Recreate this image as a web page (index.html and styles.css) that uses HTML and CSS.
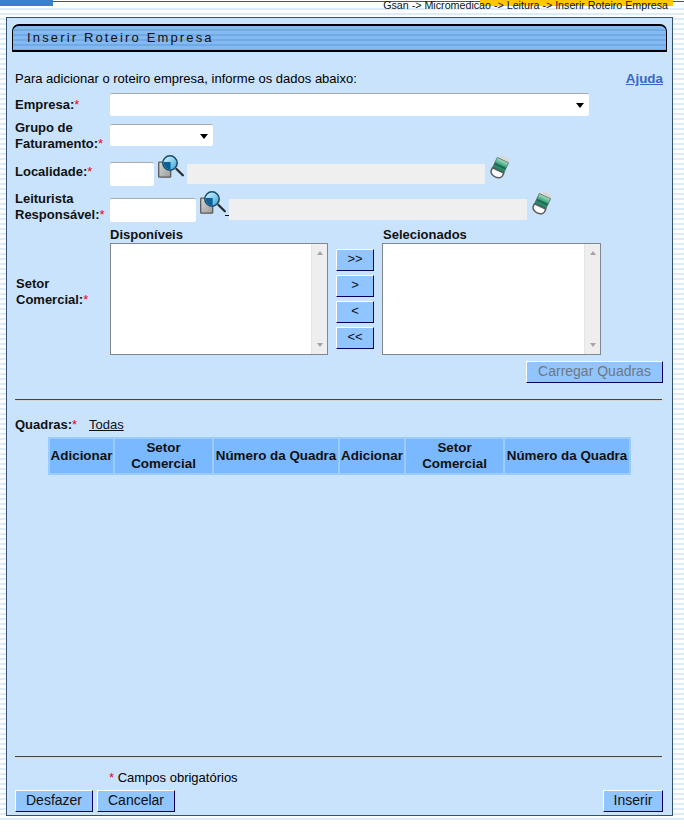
FILE: index.html
```html
<!DOCTYPE html>
<html lang="pt">
<head>
<meta charset="utf-8">
<title>Inserir Roteiro Empresa</title>
<link rel="stylesheet" href="styles.css">
</head>
<body>
<div class="shell">
  <header class="topbar">
    <div class="topbar-tab"></div>
    <div class="crumb-wrap"><div class="crumb">Gsan -&gt; Micromedicao -&gt; Leitura -&gt; Inserir Roteiro Empresa</div></div>
  </header>
  <main class="panel">
    <h1 class="title">Inserir Roteiro Empresa</h1>
    <form class="content">
      <div class="intro">
        <span>Para adicionar o roteiro empresa, informe os dados abaixo:</span>
        <a class="help" href="#">Ajuda</a>
      </div>

      <div class="row row-empresa">
        <label class="label">Empresa:<i>*</i></label>
        <div class="select select-wide"></div>
      </div>

      <div class="row row-grupo">
        <label class="label label-grupo">Grupo de Faturamento:<i>*</i></label>
        <div class="select select-small"></div>
      </div>

      <div class="row row-local">
        <label class="label label-local">Localidade:<i>*</i></label>
        <div class="input input-local"></div>
        <svg class="icon-search" viewBox="0 0 26 25"><use href="#search"/></svg>
        <div class="input-off"></div>
        <svg class="icon-erase" viewBox="0 0 24 25"><use href="#erase"/></svg>
      </div>

      <div class="row row-leit">
        <label class="label">Leiturista Responsável:<i>*</i></label>
        <div class="input input-leit"></div>
        <svg class="icon-search" viewBox="0 0 26 25"><use href="#search"/></svg>
        <span class="gap-mark"></span>
        <div class="input-off input-off-leit"></div>
        <svg class="icon-erase" viewBox="0 0 24 25"><use href="#erase"/></svg>
      </div>

      <div class="row row-setor">
        <label class="label label-setor">Setor Comercial:<i>*</i></label>
        <div class="lists">
          <div class="list-col">
            <div class="list-head">Disponíveis</div>
            <div class="listbox"><div class="list-body"></div><div class="scroll"><b class="up"></b><b class="down"></b></div></div>
          </div>
          <div class="move">
            <button type="button" class="btn btn-move">&gt;&gt;</button>
            <button type="button" class="btn btn-move">&gt;</button>
            <button type="button" class="btn btn-move">&lt;</button>
            <button type="button" class="btn btn-move">&lt;&lt;</button>
          </div>
          <div class="list-col list-col-right">
            <div class="list-head list-head-right">Selecionados</div>
            <div class="listbox"><div class="list-body"></div><div class="scroll"><b class="up"></b><b class="down"></b></div></div>
          </div>
        </div>
      </div>

      <div class="load-row"><button type="button" class="btn btn-load" disabled>Carregar Quadras</button></div>
      <div class="rule rule-top"></div>

      <div class="quadras"><span class="label-inline">Quadras:<i>*</i></span><a class="all" href="#">Todas</a></div>

      <table class="grid">
        <colgroup><col class="c1"><col class="c2"><col class="c3"><col class="c4"><col class="c2"><col class="c3"></colgroup>
        <tr>
          <th>Adicionar</th><th>Setor<br>Comercial</th><th>Número da Quadra</th>
          <th>Adicionar</th><th>Setor<br>Comercial</th><th>Número da Quadra</th>
        </tr>
      </table>

      <div class="footer">
        <div class="rule"></div>
        <div class="required"><i>*</i> Campos obrigatórios</div>
        <div class="actions">
          <button type="button" class="btn btn-act">Desfazer</button>
          <button type="button" class="btn btn-act">Cancelar</button>
          <button type="button" class="btn btn-insert">Inserir</button>
        </div>
      </div>
    </form>
  </main>
</div>

<svg class="defs" width="0" height="0">
  <defs>
    <linearGradient id="lens" x1="0" y1="0" x2="1" y2="1">
      <stop offset="0" stop-color="#e4f6fc"/><stop offset="0.55" stop-color="#7fcdec"/><stop offset="1" stop-color="#3a9bd0"/>
    </linearGradient>
    <linearGradient id="doc" x1="0" y1="0" x2="1" y2="1">
      <stop offset="0" stop-color="#d6d8d8"/><stop offset="1" stop-color="#9a9c9c"/>
    </linearGradient>
    <linearGradient id="band" x1="0" y1="0" x2="0" y2="1">
      <stop offset="0" stop-color="#a8e0c6"/><stop offset="0.4" stop-color="#47ab82"/><stop offset="0.55" stop-color="#12604a"/><stop offset="0.7" stop-color="#2f8f6c"/><stop offset="1" stop-color="#167257"/>
    </linearGradient>
    <symbol id="search" viewBox="0 0 26 25">
      <rect x="0.7" y="7.2" width="12" height="15" rx="0.8" fill="url(#doc)" stroke="#5a5a58" stroke-width="1.3"/>
      <path d="M18.5 14 L24.8 20.2" stroke="#2c2c2c" stroke-width="2.3" stroke-linecap="round"/>
      <circle cx="12" cy="8" r="7.2" fill="url(#lens)" stroke="#174a6b" stroke-width="1.5"/>
      <path d="M5.6 7 H12.6 V14.4 A7 7 0 0 1 5.6 7Z" fill="#0c5f97"/>
    </symbol>
    <symbol id="erase" viewBox="0 0 24 25">
      <g transform="rotate(25 11 12)">
        <rect x="6.5" y="0.5" width="10.5" height="6.5" rx="1" fill="#d8dad9"/>
        <rect x="4.5" y="4.5" width="12.5" height="12" fill="url(#band)" stroke="#55675f" stroke-width="0.7"/>
        <path d="M4.5 16 V18.8 A6.2 4.2 0 0 0 17 18.8 V16Z" fill="#fff" stroke="#5c5c5c" stroke-width="1.5"/>
      </g>
    </symbol>
  </defs>
</svg>
</body>
</html>
```

FILE: styles.css
```css
* { box-sizing: border-box; }
html, body { margin: 0; padding: 0; background: #fff; }
body { font: 13px/16px "Liberation Sans", Arial, sans-serif; color: #000; height: 835px; overflow: hidden; }
.defs { position: absolute; }

.shell {
  height: 820px;
  padding-left: 6px;
  background: repeating-linear-gradient(to bottom, #fff 0, #fff 3px, #dcecfb 3px, #dcecfb 5px);
}

.topbar { height: 6px; margin-left: -6px; display: flex; justify-content: space-between; position: relative; background: linear-gradient(to bottom, #fff 0, #fff 1px, #2c5a92 1px, #2c5a92 2px, #fff 2px); }
.topbar-tab { width: 53px; height: 6px; background: #3f7ec9; }
.crumb-wrap { width: 193px; height: 6px; margin-right: 11px; background: #ffc800; position: relative; }
.crumb { position: absolute; right: 5px; top: -1px; white-space: nowrap; font-size: 10.7px; line-height: 13px; color: #111; }

.panel {
  width: 667px;
  height: 799px;
  margin-top: 11px;
  padding: 6px 5px 3px;
  display: flex;
  flex-direction: column;
  background: #c9e3fd;
  border: 1px solid #33506e;
}

.title {
  width: 655px;
  height: 28px;
  margin: 0;
  padding-left: 14px;
  font-size: 13px;
  font-weight: normal;
  line-height: 24px;
  letter-spacing: 2.15px;
  color: #111;
  border: 1px solid #000;
  border-width: 2px 1px 2px 1px;
  border-radius: 7px 7px 0 0;
  background: repeating-linear-gradient(to bottom, #84baf1 0, #84baf1 3px, #6fa9e6 3px, #6fa9e6 5px);
}

.content { flex: 1; display: flex; flex-direction: column; padding: 19px 0 0 3px; }

.intro { display: flex; justify-content: space-between; width: 648px; height: 16px; line-height: 16px; }
.help { font-weight: bold; font-size: 13.4px; color: #3a66cc; }

.row { display: flex; }
.label { width: 95px; flex: none; font-weight: bold; line-height: 16px; color: #111; }
i { font-style: normal; font-weight: normal; color: #f00020; }

.select { position: relative; height: 23px; background: #fff; border-top: 1px solid #aaa; border-radius: 2px; }
.select::after { content: ""; position: absolute; right: 5px; top: 9px; border: 4px solid transparent; border-top: 5px solid #000; border-bottom: 0; }
.select-wide { width: 479px; }
.select-small { width: 103px; height: 22px; }

.row-empresa { margin-top: 6px; height: 23px; align-items: center; }
.row-grupo { margin-top: 3px; height: 32px; align-items: center; }
.row-local { margin-top: 5px; height: 30px; align-items: flex-end; }
.row-leit { margin-top: 5px; height: 31px; align-items: flex-end; }
.row-setor { margin-top: 4px; align-items: center; }

.label-grupo { padding-top: 1px; }
.label-local { align-self: flex-start; margin-top: 8px; }
.row-leit .label { align-self: flex-start; }
.label-setor { padding-left: 1px; padding-top: 2px; }

.input { height: 24px; background: #fff; border-top: 1px solid #aaa; border-radius: 2px; }
.input-local { width: 44px; }
.input-leit { width: 86px; }
.icon-search { width: 26px; height: 25px; margin: 0 0 6px 4px; align-self: flex-end; flex: none; }
.input-off { width: 298px; height: 20px; margin: 0 0 2px 3px; background: #efefef; }
.input-off-leit { height: 21px; margin: 0 0 2px 0; }
.icon-erase { width: 24px; height: 25px; margin: 0 0 6px 4px; flex: none; }
.gap-mark { width: 4px; height: 1px; margin: 0 0 6px -1px; background: #111; flex: none; }

.lists { display: flex; }
.list-head { height: 17px; font-weight: bold; line-height: 18px; color: #111; }
.list-head-right { padding-left: 1px; }
.listbox { display: flex; width: 218px; height: 112px; border: 1px solid #80878f; background: #fff; }
.list-col-right .listbox { width: 219px; }
.list-body { flex: 1; }
.scroll { width: 16px; display: flex; flex-direction: column; justify-content: space-between; align-items: center; padding: 7px 0; background: #eee; border-left: 1px solid #e4e4e4; }
.up { border: 3.5px solid transparent; border-bottom: 4px solid #a5a5a5; border-top: 0; }
.down { border: 3.5px solid transparent; border-top: 4px solid #a5a5a5; border-bottom: 0; }

.btn {
  display: block;
  padding: 0 0 2px;
  font: 14px/18px "Liberation Sans", Arial, sans-serif;
  color: #111;
  background: #90c5ff;
  border-style: solid;
  border-width: 1px;
  border-color: #fff #000060 #000060 #fff;
  border-radius: 0;
}
.move { display: flex; flex-direction: column; gap: 4px; width: 38px; margin: 23px 8px 0; }
.btn-move { width: 38px; height: 22px; font-size: 13px; }

.load-row { display: flex; justify-content: flex-end; width: 648px; margin-top: 6px; }
.btn-load { width: 137px; height: 22px; color: #70787f; }

.rule { width: 647px; height: 2px; background: linear-gradient(to bottom, #444 0, #444 1px, #d5d5d5 1px); }
.rule-top { margin-top: 16px; }

.quadras { display: flex; margin-top: 16px; height: 16px; }
.label-inline { width: 74px; font-weight: bold; color: #111; }
.all { color: #111; }

.grid { margin: 4px 0 0 33px; width: 583px; table-layout: fixed; border-collapse: separate; border-spacing: 2px; background: #9ccbff; }
.grid th { height: 34px; padding: 0; font-size: 13.4px; line-height: 16px; font-weight: bold; color: #111; text-align: center; background: #7ab8ff; white-space: nowrap; }
.c1 { width: 63px; }
.c2 { width: 97px; }
.c3 { width: 124px; }
.c4 { width: 64px; }

.footer { margin-top: auto; }
.required { margin: 12px 0 0 94px; height: 16px; line-height: 16px; }
.actions { display: flex; gap: 4px; width: 648px; margin-top: 4px; }
.btn-act { width: 78px; height: 22px; }
.btn-insert { width: 60px; height: 22px; margin-left: auto; }
```
